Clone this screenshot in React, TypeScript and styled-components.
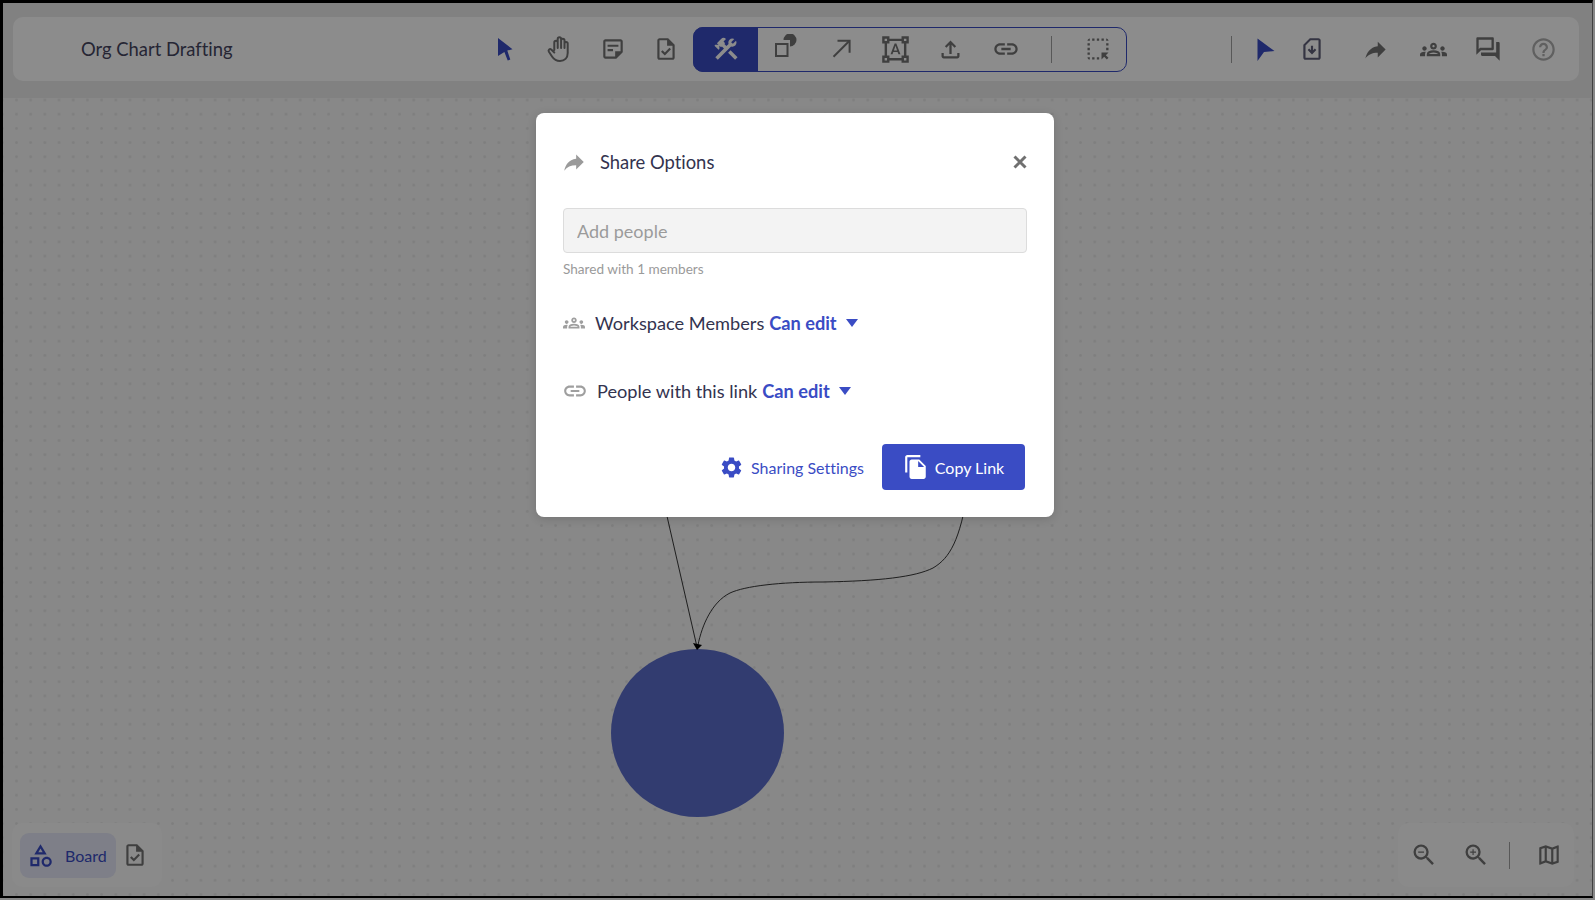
import React from 'react';
import styled, { createGlobalStyle } from 'styled-components';
import {
  MdConstruction, MdFileCopy, MdHelpOutline, MdLink, MdOutlineCategory,
  MdOutlineFileUpload, MdOutlineForum, MdOutlineFormatShapes, MdOutlineGroups, MdOutlineHighlightAlt, MdOutlineMap,
  MdOutlineSimCardDownload, MdOutlineStickyNote2, MdOutlineTask, MdOutlineZoomIn,
  MdOutlineZoomOut, MdReply, MdSettings,
} from 'react-icons/md';

const Global = createGlobalStyle`
  html, body { margin: 0; padding: 0; }
  body { font-family: "Lato", "Noto Sans", sans-serif; overflow: hidden; font-variant-ligatures: none; }
  * { box-sizing: border-box; }
`;

const PRIMARY = '#3a4cc4';

const Page = styled.div`
  position: relative;
  width: 1595px;
  height: 900px;
  background: #f8f8f8;
  overflow: hidden;
`;

const Frame = styled.div`
  width: 1593px;
  height: 898px;
  border: solid #000;
  border-width: 3px 0 2px 3px;
  border-right: 1px solid #777;
  display: flex;
  flex-direction: column;
  background: #ececec;
`;

const HeaderStrip = styled.header`
  flex: 0 0 95px;
  padding: 14px 13px 0 10px;
`;

const Toolbar = styled.div`
  height: 64px;
  background: #ffffff;
  border-radius: 10px;
  display: flex;
  align-items: center;
`;

const Title = styled.div`
  flex: 0 0 465px;
  padding-left: 68px;
  font-size: 18.4px;
  color: #45455f;
`;

const Tool = styled.button<{ $w?: number; $color?: string; $ml?: number }>`
  flex: 0 0 ${p => p.$w ?? 54}px;
  height: 44px;
  padding: 0;
  margin-left: ${p => p.$ml ?? 0}px;
  border: 0;
  background: transparent;
  display: flex;
  align-items: center;
  justify-content: center;
  color: ${p => p.$color ?? '#737373'};
`;

const ToolGroup = styled.div`
  width: 434px;
  height: 45px;
  margin-left: 1px;
  display: flex;
  align-items: center;
  border: 1px solid ${PRIMARY};
  border-radius: 10px;
`;

const ActiveTool = styled.button`
  flex: 0 0 65px;
  height: 45px;
  margin: -1px 0 -1px -1px;
  padding: 0;
  border: 0;
  border-radius: 10px 0 0 10px;
  background: ${PRIMARY};
  color: #fff;
  display: flex;
  align-items: center;
  justify-content: center;
`;

const VRule = styled.span<{ $h?: number; $ml?: number; $mr?: number }>`
  flex: 0 0 1px;
  height: ${p => p.$h ?? 27}px;
  margin-left: ${p => p.$ml ?? 0}px;
  margin-right: ${p => p.$mr ?? 0}px;
  background: #a0a0a0;
`;

const RightTools = styled.div`
  display: flex;
  align-items: center;
  margin-left: auto;
  padding-right: 17px;
`;

const Flip = styled.span`
  display: inline-flex;
  transform: scaleX(-1);
`;

const Canvas = styled.main`
  position: relative;
  flex: 1;
  background-color: #f7f7f7;
  background-image: radial-gradient(circle, #e6e6e6 0, #e6e6e6 0.9px, transparent 1.7px);
  background-size: 14.2px 14.2px;
  background-position: -7.8px -5.1px;
`;

const Edges = styled.svg`
  position: absolute;
  left: -3px;
  top: -98px;
  width: 1595px;
  height: 900px;
`;

const CircleNode = styled.div`
  position: absolute;
  left: 608px;
  top: 551px;
  width: 173px;
  height: 168px;
  border-radius: 50%;
  background: #5b6dcc;
`;

const BottomPanel = styled.div<{ $side: 'left' | 'right' }>`
  position: absolute;
  top: 725px;
  ${p => (p.$side === 'left' ? 'left: 9px; width: 150px; padding-left: 8px;' : 'left: 1395px; width: 176px;')}
  height: 64px;
  background: #fbfbfb;
  border-radius: 10px;
  display: flex;
  align-items: center;
`;

const BoardPill = styled.div`
  width: 96px;
  height: 45px;
  background: #e5e7f7;
  border-radius: 9px;
  color: ${PRIMARY};
  display: flex;
  align-items: center;
  padding-left: 7px;
  gap: 11px;
  font-size: 16px;
`;

const Scrim = styled.div`
  position: absolute;
  inset: 0;
  background: rgba(0, 0, 0, 0.45);
  display: flex;
  justify-content: center;
  align-items: flex-start;
  padding: 113px 5px 0 0;
`;

const Dialog = styled.section`
  width: 518px;
  height: 404px;
  background: #fff;
  border-radius: 8px;
  box-shadow: 0 2px 10px rgba(0, 0, 0, 0.15);
  padding: 0 27px;
  color: #33334f;
`;

const DialogHead = styled.div`
  height: 95px;
  display: flex;
  align-items: center;
  font-size: 18.4px;
  padding-top: 3px;
  color: #33334f;
`;

const HeadIcon = styled.span`
  display: inline-flex;
  width: 37px;
  color: #9a9a9a;
  transform: translateX(-2px);
`;

const CloseButton = styled.button`
  margin-left: auto;
  width: 14px;
  height: 14px;
  padding: 0;
  border: 0;
  background: none;
  color: #707070;
  display: flex;
  align-items: center;
  justify-content: center;
`;

const PeopleInput = styled.input`
  display: block;
  width: 464px;
  height: 45px;
  background: #f3f3f3;
  border: 1px solid #dcdcdc;
  border-radius: 4px;
  padding: 0 13px;
  font-family: inherit;
  font-size: 18px;
  outline: none;
  &::placeholder { color: #9b9b9b; opacity: 1; }
`;

const SharedNote = styled.div`
  margin-top: 8px;
  font-size: 13.6px;
  line-height: 16px;
  color: #9a9a9a;
`;

const AccessRow = styled.div<{ $mt: number; $gap: number; $iconShift?: number }>`
  margin-top: ${p => p.$mt}px;
  height: 24px;
  display: flex;
  align-items: center;
  font-size: 18.2px;
  color: #33334f;
  > svg:first-child {
    margin-left: ${p => p.$iconShift ?? 0}px;
    margin-right: ${p => p.$gap}px;
    color: #9f9f9f;
    flex: none;
  }
`;

const CanEdit = styled.span`
  margin-left: 5px;
  color: ${PRIMARY};
  font-weight: 700;
`;

const Caret = styled.span`
  margin-left: 9px;
  margin-top: -1px;
  width: 0;
  height: 0;
  border-left: 6.5px solid transparent;
  border-right: 6.5px solid transparent;
  border-top: 8px solid ${PRIMARY};
`;

const DialogFoot = styled.div`
  margin-top: 41px;
  display: flex;
  align-items: center;
  justify-content: flex-end;
  padding-right: 2px;
`;

const SettingsLink = styled.a`
  display: flex;
  align-items: center;
  gap: 7px;
  color: ${PRIMARY};
  font-size: 16px;
  margin-right: 18px;
`;

const CopyButton = styled.button`
  width: 143px;
  height: 46px;
  border: 0;
  border-radius: 4px;
  background: ${PRIMARY};
  color: #fff;
  font-family: inherit;
  font-size: 16px;
  display: flex;
  align-items: center;
  justify-content: center;
  gap: 6px;
`;

const Pointer = () => (
  <svg width="26" height="26" viewBox="0 0 26 26" fill="currentColor">
    <path d="M6 2 L20.5 13.2 L15.3 14.6 L18.3 23.6 L15.7 24.6 L12.4 16 L6 20 Z" />
  </svg>
);

const PointerSolid = () => (
  <svg width="26" height="26" viewBox="0 0 26 26" fill="currentColor">
    <path d="M4.5 2.5 L21.5 15 L11 16 L4.5 25 Z" />
  </svg>
);

const HandIcon = () => (
  <svg width="26" height="28" viewBox="0 0 26 28" fill="none" stroke="currentColor" strokeWidth="2" strokeLinecap="round" strokeLinejoin="round">
    <path d="M8.3 15 V7.5 a1.7 1.7 0 0 1 3.4 0 V13 M11.7 7 V4 a1.7 1.7 0 0 1 3.4 0 V13 M15.1 5.5 a1.7 1.7 0 0 1 3.4 0 V13 M18.5 8.5 a1.6 1.6 0 0 1 3.2 0 V18 C21.7 23 18.5 26 14 26 C10 26 8 24.5 6 21.5 L2.8 16.5 C2 15 3.8 13.3 5.2 14.5 L8.3 17.5" />
  </svg>
);

const Shapes = () => (
  <svg width="24" height="30" viewBox="0 -3 24 30">
    <rect x="2" y="7" width="11.5" height="12" fill="none" stroke="currentColor" strokeWidth="2" />
    <path d="M16 3 V9.5 A6.5 6.5 0 0 0 22.5 3 A6.5 6.5 0 0 0 16 -3.5 A6.5 6.5 0 0 0 9.5 3 Z" fill="currentColor" />
  </svg>
);

const DiagonalArrow = () => (
  <svg width="24" height="24" viewBox="0 0 24 24" fill="none" stroke="currentColor" strokeWidth="2">
    <path d="M4.5 19.8 L20 4.2" />
    <path d="M8.5 3.8 H20.6 V15.8" />
  </svg>
);

const CloseX = () => (
  <svg width="14" height="14" viewBox="0 0 14 14" fill="none" stroke="currentColor" strokeWidth="3">
    <path d="M1.5 1.5 L12.5 12.5 M12.5 1.5 L1.5 12.5" />
  </svg>
);

export default function App() {
  return (
    <Page>
      <Global />
      <Frame>
        <HeaderStrip>
          <Toolbar>
            <Title>Org Chart Drafting</Title>
            <Tool $color={PRIMARY}><Pointer /></Tool>
            <Tool><HandIcon /></Tool>
            <Tool><MdOutlineStickyNote2 size={26} /></Tool>
            <Tool $w={52}><MdOutlineTask size={26} /></Tool>
            <ToolGroup>
              <ActiveTool><MdConstruction size={28} /></ActiveTool>
              <Tool $w={55}><Shapes /></Tool>
              <Tool $w={55}><DiagonalArrow /></Tool>
              <Tool $w={55}><MdOutlineFormatShapes size={29} /></Tool>
              <Tool $w={55}><MdOutlineFileUpload size={27} /></Tool>
              <Tool $w={55}><MdLink size={28} /></Tool>
              <VRule $ml={18} />
              <Tool $w={55} $ml={18}><MdOutlineHighlightAlt size={28} /></Tool>
            </ToolGroup>
            <RightTools>
              <VRule $mr={11} />
              <Tool $w={45} $color={PRIMARY}><PointerSolid /></Tool>
              <Tool $w={48} $color="#5f5f78"><MdOutlineSimCardDownload size={26} /></Tool>
              <Tool $w={78}><Flip><MdReply size={27} /></Flip></Tool>
              <Tool $w={38}><MdOutlineGroups size={27} /></Tool>
              <Tool $w={72}><MdOutlineForum size={28} /></Tool>
              <Tool $w={38} $color="#b0b0b0"><MdHelpOutline size={27} /></Tool>
            </RightTools>
          </Toolbar>
        </HeaderStrip>
        <Canvas>
          <CircleNode />
          <Edges viewBox="0 0 1595 900">
            <path d="M661 490 L697 647" fill="none" stroke="#222" strokeWidth="0.9" />
            <path d="M968 490 C 960 540, 950 558, 933 568 C 915 577, 880 581, 823 582 C 780 582, 745 586, 730 593 C 712 602, 702 625, 698 645" fill="none" stroke="#222" strokeWidth="0.9" />
            <path d="M693 643 L702 645 L697 650 Z" fill="#000" />
          </Edges>
          <BottomPanel $side="left">
            <BoardPill><MdOutlineCategory size={27} />Board</BoardPill>
            <Tool $w={38}><MdOutlineTask size={26} /></Tool>
          </BottomPanel>
          <BottomPanel $side="right">
            <Tool $w={52}><MdOutlineZoomOut size={28} /></Tool>
            <Tool $w={52}><MdOutlineZoomIn size={28} /></Tool>
            <VRule $ml={7} $h={27} />
            <Tool $w={78}><MdOutlineMap size={26} /></Tool>
          </BottomPanel>
        </Canvas>
      </Frame>
      <Scrim>
        <Dialog>
          <DialogHead>
            <HeadIcon><Flip><MdReply size={26} /></Flip></HeadIcon>
            Share Options
            <CloseButton><CloseX /></CloseButton>
          </DialogHead>
          <PeopleInput placeholder="Add people" readOnly />
          <SharedNote>Shared with 1 members</SharedNote>
          <AccessRow $mt={34} $gap={10}>
            <MdOutlineGroups size={22} />
            Workspace Members <CanEdit>Can edit</CanEdit><Caret />
          </AccessRow>
          <AccessRow $mt={44} $gap={9} $iconShift={-1}>
            <MdLink size={26} />
            People with this link <CanEdit>Can edit</CanEdit><Caret />
          </AccessRow>
          <DialogFoot>
            <SettingsLink><MdSettings size={25} />Sharing Settings</SettingsLink>
            <CopyButton><MdFileCopy size={26} />Copy Link</CopyButton>
          </DialogFoot>
        </Dialog>
      </Scrim>
    </Page>
  );
}
